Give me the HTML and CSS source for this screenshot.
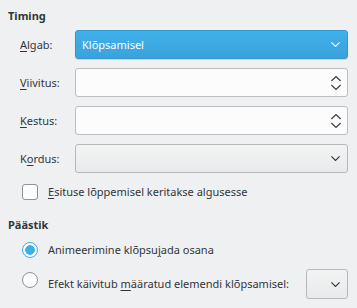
FILE: index.html
```html
<!DOCTYPE html>
<html lang="et">
<head>
  <meta charset="UTF-8" />
  <title>Timing</title>
  <link rel="stylesheet" href="styles.css">
</head>
<body>

<div class="panel">
  <h2 class="group-title">Timing</h2>

  <div class="form">
    <label class="field-label"><u>A</u>lgab:</label>
    <div class="combo combo-active">
      <span>Klõpsamisel</span>
      <svg class="chevron" width="9" height="5" viewBox="0 0 9 5"><path d="M0.4 0.4 L4.5 4.5 L8.6 0.4" fill="none" stroke="#fcfcfc" stroke-width="1.1"/></svg>
    </div>

    <label class="field-label"><u>V</u>iivitus:</label>
    <div class="spin">
      <svg class="spin-arrows" width="10" height="14" viewBox="0 0 10 14"><path d="M0.4 5 L5 0.5 L9.6 5 M0.4 9 L5 13.5 L9.6 9" fill="none" stroke="#31363b" stroke-width="1.1"/></svg>
    </div>

    <label class="field-label"><u>K</u>estus:</label>
    <div class="spin">
      <svg class="spin-arrows" width="10" height="14" viewBox="0 0 10 14"><path d="M0.4 5 L5 0.5 L9.6 5 M0.4 9 L5 13.5 L9.6 9" fill="none" stroke="#31363b" stroke-width="1.1"/></svg>
    </div>

    <label class="field-label">K<u>o</u>rdus:</label>
    <div class="combo">
      <svg class="chevron" width="9" height="5" viewBox="0 0 9 5"><path d="M0.4 0.4 L4.5 4.5 L8.6 0.4" fill="none" stroke="#31363b" stroke-width="1.1"/></svg>
    </div>
  </div>

  <div class="check-row">
    <span class="checkbox"></span>
    <span><u>E</u>situse lõppemisel keritakse algusesse</span>
  </div>

  <h2 class="group-title trigger-title">Päästik</h2>

  <div class="radio-row">
    <span class="radio checked"></span>
    <span>Animeerimine klõpsu<u>j</u>ada osana</span>
  </div>

  <div class="radio-row radio-row-last">
    <span class="radio"></span>
    <span class="radio-text">Efekt käivitub <u>m</u>ääratud elemendi klõpsamisel:</span>
    <div class="combo combo-small">
      <svg class="chevron" width="9" height="5" viewBox="0 0 9 5"><path d="M0.4 0.4 L4.5 4.5 L8.6 0.4" fill="none" stroke="#31363b" stroke-width="1.1"/></svg>
    </div>
  </div>
</div>

</body>
</html>
```

FILE: styles.css
```css
body {
  margin: 0;
  font-family: 'Noto Sans', 'DejaVu Sans', sans-serif;
  font-size: 11px;
  line-height: 16px;
  background: #eff0f1;
  color: #31363b;
}

.panel {
  padding: 8px 9px 0 8px;
}

.group-title {
  margin: 0;
  font-size: 11px;
  line-height: 16px;
  font-weight: bold;
}

u {
  text-decoration-thickness: 1px;
  text-underline-offset: 2px;
}

.form {
  display: grid;
  grid-template-columns: 55px 1fr;
  grid-auto-rows: 29px;
  row-gap: 9px;
  margin-top: 6px;
  padding-left: 12px;
}

.field-label {
  display: flex;
  align-items: center;
  padding-top: 1px;
}

.combo, .spin {
  display: flex;
  align-items: center;
  box-sizing: border-box;
  border-radius: 3px;
  padding: 0 6px;
}

.combo {
  border: 1px solid #b6b8ba;
  background: linear-gradient(#f2f3f3, #e9eaeb);
  justify-content: flex-end;
  padding-right: 7px;
}

.combo-active {
  justify-content: space-between;
  border-color: #3496cd;
  background: linear-gradient(#40b1eb, #3aa2db);
  color: #fcfcfc;
  box-shadow: 0 1px 1px rgba(0, 0, 0, 0.12);
}

.spin {
  border: 1px solid #bcbebf;
  background: #fcfcfc;
  justify-content: flex-end;
  padding-right: 6px;
}

.check-row, .radio-row {
  display: flex;
  align-items: center;
  gap: 10px;
  padding-left: 14px;
}

.check-row {
  margin-top: 11px;
}

.checkbox, .radio {
  box-sizing: border-box;
  width: 16px;
  height: 16px;
  flex: none;
  border: 1px solid #909294;
  background: #fcfcfc;
}

.checkbox {
  border-radius: 3px;
}

.radio {
  border-radius: 50%;
}

.radio.checked {
  border-color: #3daee9;
  background: radial-gradient(circle, #3daee9 0 4.5px, #fcfcfc 5px);
}

.trigger-title {
  margin-top: 17px;
}

.radio-row {
  margin-top: 9px;
}

.radio-row-last {
  margin-top: 11px;
  align-items: flex-start;
}

.radio-row-last .radio {
  margin-top: 3px;
}

.radio-text {
  margin-top: 7px;
}

.combo-small {
  margin-left: auto;
  width: 42px;
  height: 30px;
}
```
